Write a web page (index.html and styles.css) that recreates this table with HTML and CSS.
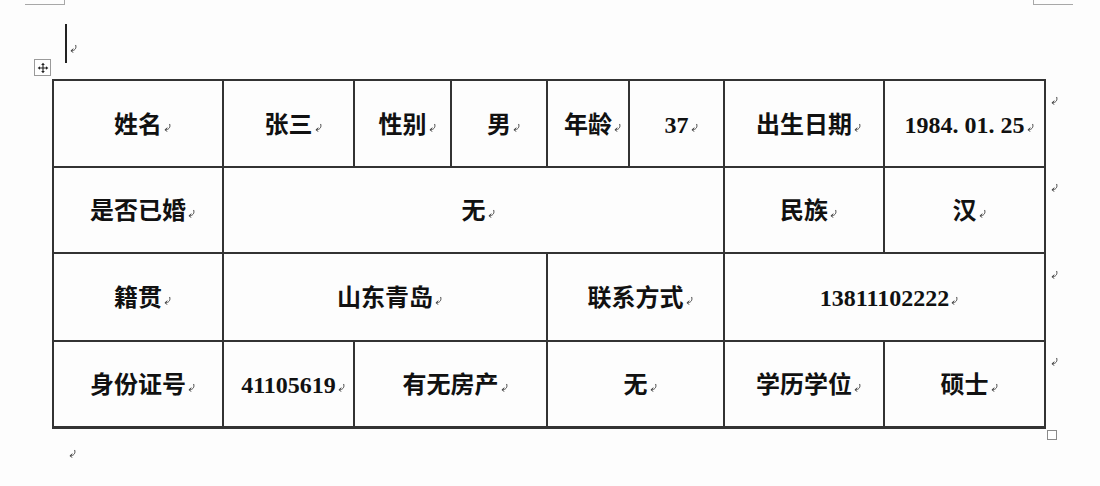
FILE: index.html
```html
<!DOCTYPE html>
<html lang="zh-CN">
<head>
<meta charset="utf-8">
<title>表格</title>
<link rel="stylesheet" href="styles.css">
</head>
<body>
<div class="page">
  <div class="crop crop-l"></div>
  <div class="crop crop-r"></div>

  <div class="para-top">
    <span class="cursor"></span>
    <svg class="pm pm-top" viewBox="0 0 10 10"><path d="M7.5 1.5 C8.5 5 6.5 7.5 2.5 7.5 M4.5 5.5 L2.2 7.5 L4.5 9.3" /></svg>
  </div>

  <div class="table-wrap">
    <div class="move-handle">
      <svg viewBox="0 0 15 15"><path d="M7.5 3 V12 M3 7.5 H12" /><path class="fill" d="M7.5 0.8 L5.2 3.8 H9.8Z M7.5 14.2 L5.2 11.2 H9.8Z M0.8 7.5 L3.8 5.2 V9.8Z M14.2 7.5 L11.2 5.2 V9.8Z" /></svg>
    </div>

    <div class="tbl">
      <div class="c"><span class="t">姓名<svg class="pm" viewBox="0 0 10 10"><path d="M7.5 1.5 C8.5 5 6.5 7.5 2.5 7.5 M4.5 5.5 L2.2 7.5 L4.5 9.3" /></svg></span></div>
      <div class="c"><span class="t">张三<svg class="pm" viewBox="0 0 10 10"><path d="M7.5 1.5 C8.5 5 6.5 7.5 2.5 7.5 M4.5 5.5 L2.2 7.5 L4.5 9.3" /></svg></span></div>
      <div class="c"><span class="t">性别<svg class="pm" viewBox="0 0 10 10"><path d="M7.5 1.5 C8.5 5 6.5 7.5 2.5 7.5 M4.5 5.5 L2.2 7.5 L4.5 9.3" /></svg></span></div>
      <div class="c"><span class="t">男<svg class="pm" viewBox="0 0 10 10"><path d="M7.5 1.5 C8.5 5 6.5 7.5 2.5 7.5 M4.5 5.5 L2.2 7.5 L4.5 9.3" /></svg></span></div>
      <div class="c"><span class="t">年龄<svg class="pm" viewBox="0 0 10 10"><path d="M7.5 1.5 C8.5 5 6.5 7.5 2.5 7.5 M4.5 5.5 L2.2 7.5 L4.5 9.3" /></svg></span></div>
      <div class="c"><span class="t num">37<svg class="pm" viewBox="0 0 10 10"><path d="M7.5 1.5 C8.5 5 6.5 7.5 2.5 7.5 M4.5 5.5 L2.2 7.5 L4.5 9.3" /></svg></span></div>
      <div class="c"><span class="t">出生日期<svg class="pm" viewBox="0 0 10 10"><path d="M7.5 1.5 C8.5 5 6.5 7.5 2.5 7.5 M4.5 5.5 L2.2 7.5 L4.5 9.3" /></svg></span></div>
      <div class="c"><span class="t num">1984. 01. 25<svg class="pm" viewBox="0 0 10 10"><path d="M7.5 1.5 C8.5 5 6.5 7.5 2.5 7.5 M4.5 5.5 L2.2 7.5 L4.5 9.3" /></svg></span></div>

      <div class="c"><span class="t">是否已婚<svg class="pm" viewBox="0 0 10 10"><path d="M7.5 1.5 C8.5 5 6.5 7.5 2.5 7.5 M4.5 5.5 L2.2 7.5 L4.5 9.3" /></svg></span></div>
      <div class="c span5"><span class="t">无<svg class="pm" viewBox="0 0 10 10"><path d="M7.5 1.5 C8.5 5 6.5 7.5 2.5 7.5 M4.5 5.5 L2.2 7.5 L4.5 9.3" /></svg></span></div>
      <div class="c"><span class="t">民族<svg class="pm" viewBox="0 0 10 10"><path d="M7.5 1.5 C8.5 5 6.5 7.5 2.5 7.5 M4.5 5.5 L2.2 7.5 L4.5 9.3" /></svg></span></div>
      <div class="c"><span class="t">汉<svg class="pm" viewBox="0 0 10 10"><path d="M7.5 1.5 C8.5 5 6.5 7.5 2.5 7.5 M4.5 5.5 L2.2 7.5 L4.5 9.3" /></svg></span></div>

      <div class="c"><span class="t">籍贯<svg class="pm" viewBox="0 0 10 10"><path d="M7.5 1.5 C8.5 5 6.5 7.5 2.5 7.5 M4.5 5.5 L2.2 7.5 L4.5 9.3" /></svg></span></div>
      <div class="c span3"><span class="t">山东青岛<svg class="pm" viewBox="0 0 10 10"><path d="M7.5 1.5 C8.5 5 6.5 7.5 2.5 7.5 M4.5 5.5 L2.2 7.5 L4.5 9.3" /></svg></span></div>
      <div class="c span2"><span class="t">联系方式<svg class="pm" viewBox="0 0 10 10"><path d="M7.5 1.5 C8.5 5 6.5 7.5 2.5 7.5 M4.5 5.5 L2.2 7.5 L4.5 9.3" /></svg></span></div>
      <div class="c span2"><span class="t num">13811102222<svg class="pm" viewBox="0 0 10 10"><path d="M7.5 1.5 C8.5 5 6.5 7.5 2.5 7.5 M4.5 5.5 L2.2 7.5 L4.5 9.3" /></svg></span></div>

      <div class="c"><span class="t">身份证号<svg class="pm" viewBox="0 0 10 10"><path d="M7.5 1.5 C8.5 5 6.5 7.5 2.5 7.5 M4.5 5.5 L2.2 7.5 L4.5 9.3" /></svg></span></div>
      <div class="c"><span class="t num">41105619<svg class="pm" viewBox="0 0 10 10"><path d="M7.5 1.5 C8.5 5 6.5 7.5 2.5 7.5 M4.5 5.5 L2.2 7.5 L4.5 9.3" /></svg></span></div>
      <div class="c span2"><span class="t">有无房产<svg class="pm" viewBox="0 0 10 10"><path d="M7.5 1.5 C8.5 5 6.5 7.5 2.5 7.5 M4.5 5.5 L2.2 7.5 L4.5 9.3" /></svg></span></div>
      <div class="c span2"><span class="t">无<svg class="pm" viewBox="0 0 10 10"><path d="M7.5 1.5 C8.5 5 6.5 7.5 2.5 7.5 M4.5 5.5 L2.2 7.5 L4.5 9.3" /></svg></span></div>
      <div class="c"><span class="t">学历学位<svg class="pm" viewBox="0 0 10 10"><path d="M7.5 1.5 C8.5 5 6.5 7.5 2.5 7.5 M4.5 5.5 L2.2 7.5 L4.5 9.3" /></svg></span></div>
      <div class="c"><span class="t">硕士<svg class="pm" viewBox="0 0 10 10"><path d="M7.5 1.5 C8.5 5 6.5 7.5 2.5 7.5 M4.5 5.5 L2.2 7.5 L4.5 9.3" /></svg></span></div>
    </div>

    <div class="row-marks">
      <div class="rm"><svg class="pm" viewBox="0 0 10 10"><path d="M7.5 1.5 C8.5 5 6.5 7.5 2.5 7.5 M4.5 5.5 L2.2 7.5 L4.5 9.3" /></svg></div>
      <div class="rm"><svg class="pm" viewBox="0 0 10 10"><path d="M7.5 1.5 C8.5 5 6.5 7.5 2.5 7.5 M4.5 5.5 L2.2 7.5 L4.5 9.3" /></svg></div>
      <div class="rm"><svg class="pm" viewBox="0 0 10 10"><path d="M7.5 1.5 C8.5 5 6.5 7.5 2.5 7.5 M4.5 5.5 L2.2 7.5 L4.5 9.3" /></svg></div>
      <div class="rm"><svg class="pm" viewBox="0 0 10 10"><path d="M7.5 1.5 C8.5 5 6.5 7.5 2.5 7.5 M4.5 5.5 L2.2 7.5 L4.5 9.3" /></svg></div>
      <div class="resize-handle"></div>
    </div>
  </div>

  <div class="para-bottom">
    <svg class="pm" viewBox="0 0 10 10"><path d="M7.5 1.5 C8.5 5 6.5 7.5 2.5 7.5 M4.5 5.5 L2.2 7.5 L4.5 9.3" /></svg>
  </div>
</div>
</body>
</html>
```

FILE: styles.css
```css
html, body {
  margin: 0;
  padding: 0;
  background: #fdfdfd;
}

.page {
  position: relative;
  width: 1100px;
  height: 486px;
  overflow: hidden;
  padding-top: 24px;
  box-sizing: border-box;
  font-family: "Liberation Serif", "Noto Sans CJK SC", serif;
  color: #111;
}

.crop {
  position: absolute;
  top: -1px;
  width: 40px;
  height: 6px;
  box-sizing: border-box;
  border-bottom: 1px solid #a8a8a8;
}
.crop-l {
  left: 25px;
  border-right: 1px solid #a8a8a8;
}
.crop-r {
  left: 1033px;
  border-left: 1px solid #a8a8a8;
}

.pm {
  width: 9px;
  height: 9px;
  fill: none;
  stroke: #444;
  stroke-width: 1.1;
  stroke-linecap: round;
  stroke-linejoin: round;
}

.para-top {
  display: flex;
  align-items: center;
  height: 39px;
  padding-left: 65px;
  margin-bottom: 16px;
}
.cursor {
  display: block;
  width: 2px;
  height: 39px;
  background: #222;
}
.pm-top {
  margin-left: 2px;
  margin-top: 10px;
}

.table-wrap {
  position: relative;
  display: flex;
  padding-left: 52px;
}

.move-handle {
  position: absolute;
  left: 34px;
  top: -20px;
  width: 17px;
  height: 17px;
  box-sizing: border-box;
  border: 1px solid #9a9a9a;
  background: #fff;
  display: flex;
  align-items: center;
  justify-content: center;
}
.move-handle svg {
  width: 12px;
  height: 12px;
  fill: none;
  stroke: #222;
  stroke-width: 1.4;
}
.move-handle svg .fill {
  fill: #222;
  stroke: none;
}

.tbl {
  display: grid;
  grid-template-columns: 168px 129px 95px 94px 80px 93px 158px 159px;
  grid-template-rows: 85px 84px 86px 84px;
  gap: 2px;
  padding: 2px;
  background: #333;
}

.c {
  background: #fdfdfd;
  display: flex;
  align-items: center;
  justify-content: center;
  font-size: 24px;
  font-weight: 700;
  line-height: 1;
}
.span2 { grid-column: span 2; }
.span3 { grid-column: span 3; }
.span5 { grid-column: span 5; }

.t {
  white-space: nowrap;
  margin-top: 2px;
}
.t .pm {
  display: inline-block;
  margin-left: 1px;
  margin-right: -10px;
  vertical-align: 1px;
}
.num {
  font-size: 24px;
}

.row-marks {
  position: relative;
  display: flex;
  flex-direction: column;
  padding-top: 2px;
  padding-left: 4px;
}
.rm {
  height: 87px;
  padding-top: 15px;
  box-sizing: border-box;
}
.rm .pm {
  display: block;
}
.resize-handle {
  position: absolute;
  left: 1px;
  bottom: -11px;
  width: 10px;
  height: 10px;
  box-sizing: border-box;
  border: 1px solid #8a8a8a;
  background: #fff;
}

.para-bottom {
  padding-left: 68px;
  padding-top: 20px;
}
.para-bottom .pm {
  display: block;
}
```
